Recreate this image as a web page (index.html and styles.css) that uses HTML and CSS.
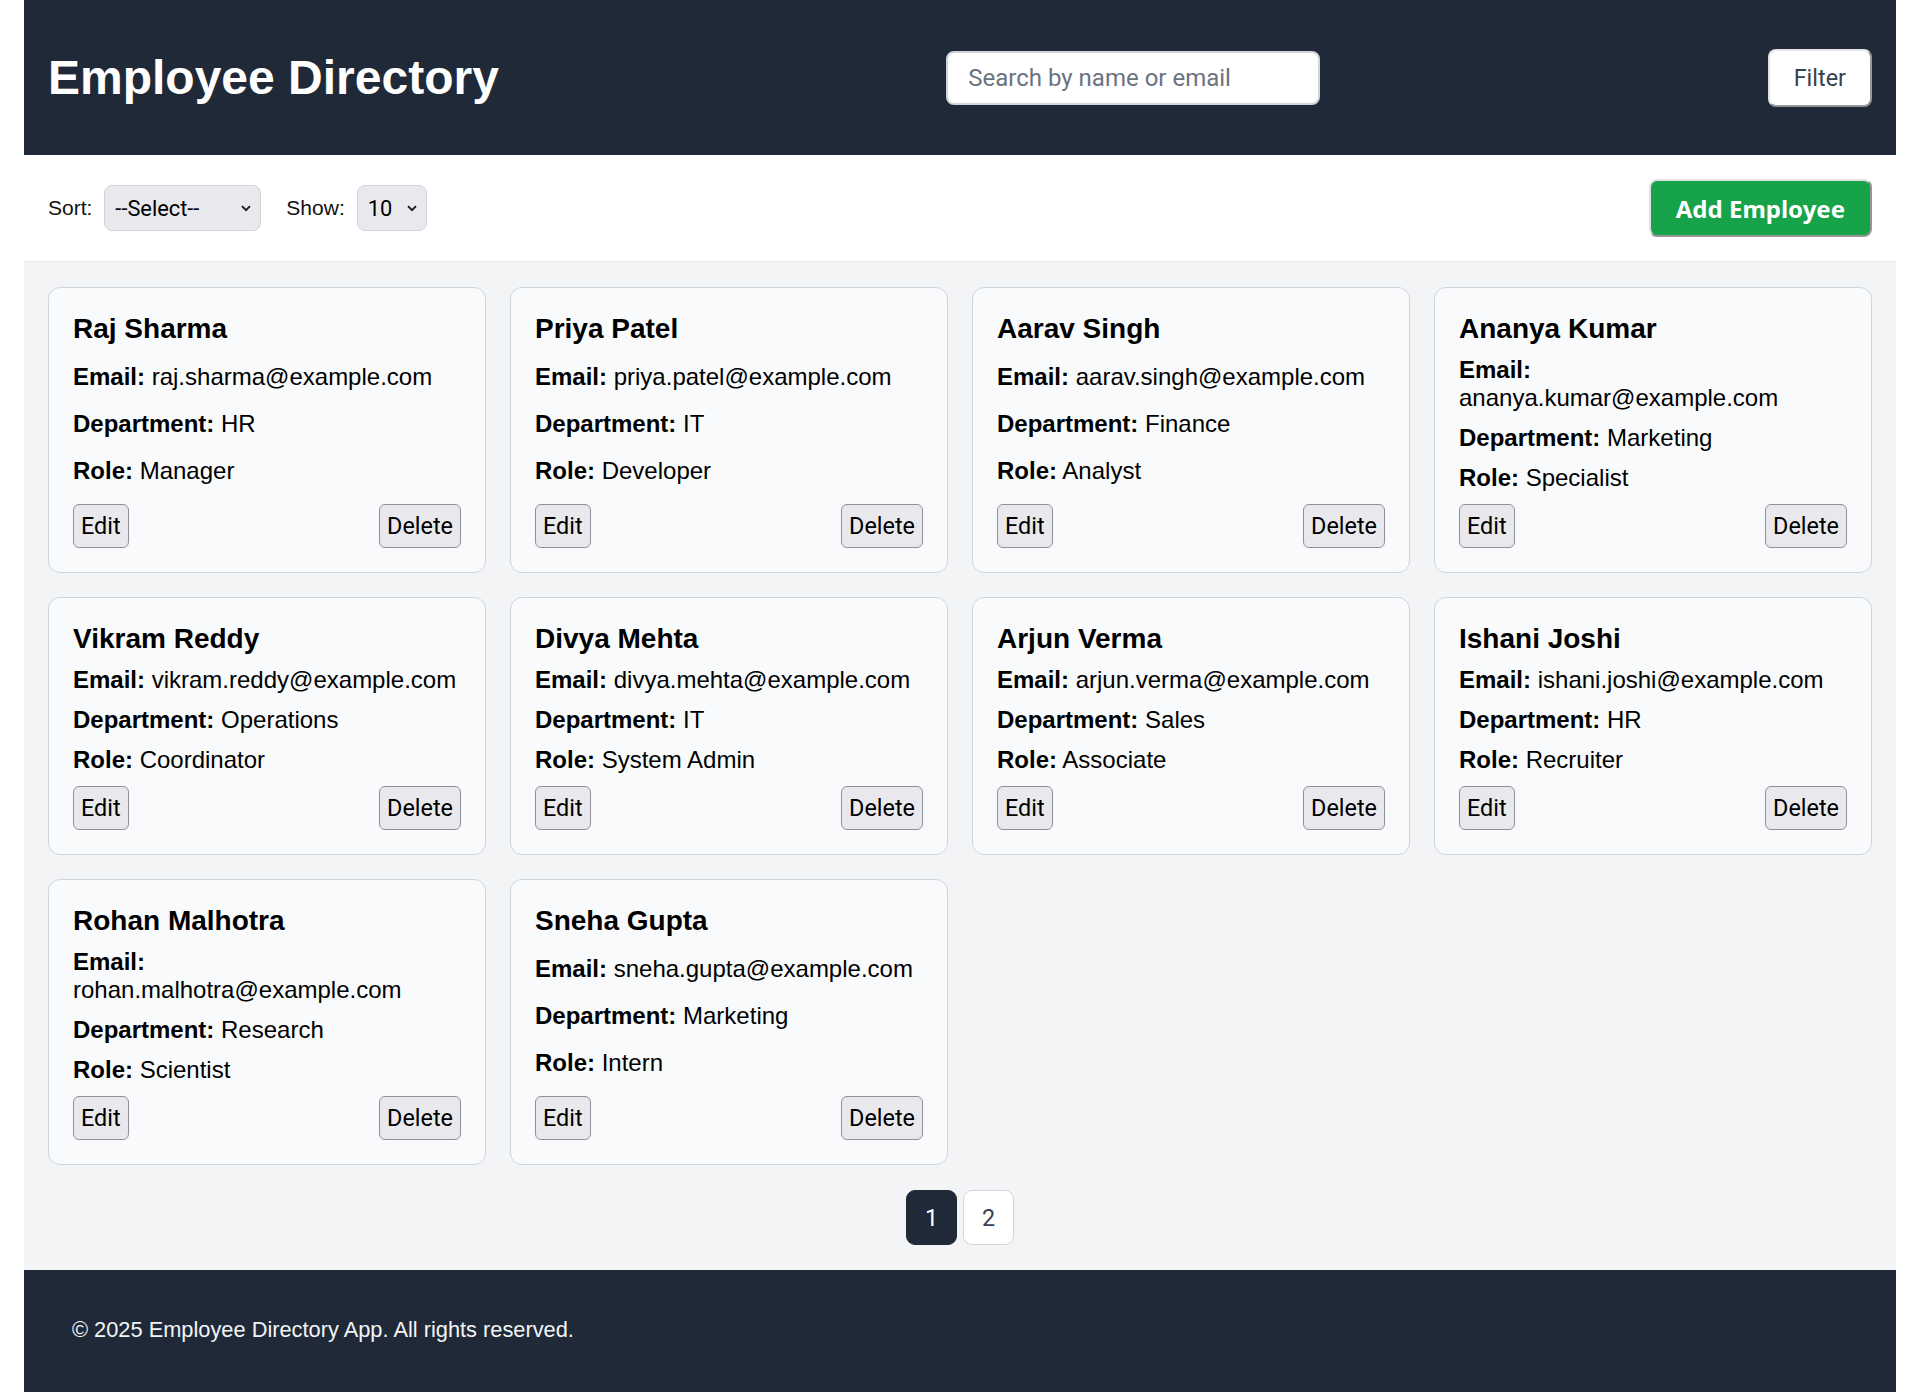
FILE: index.html
```html
<!DOCTYPE html>
<html lang="en">
<head>
<meta charset="utf-8">
<title>Employee Directory</title>
<link rel="stylesheet" href="styles.css">
</head>
<body>
<div class="app">
  <header class="header">
    <h1 class="title">Employee Directory</h1>
    <input class="search" type="text" placeholder="Search by name or email">
    <button class="btn-filter">Filter</button>
  </header>

  <div class="toolbar">
    <div class="controls">
      <label class="ctl-label">Sort:</label>
      <span class="select-wrap">
        <select class="select select-sort"><option>--Select--</option></select>
        <svg class="chev" width="10" height="7" viewBox="0 0 10 7"><path d="M1 1.2 L5 5.2 L9 1.2" fill="none" stroke="#1a1a1a" stroke-width="1.9"/></svg>
      </span>
      <label class="ctl-label ctl-show">Show:</label>
      <span class="select-wrap">
        <select class="select select-show"><option>10</option></select>
        <svg class="chev" width="10" height="7" viewBox="0 0 10 7"><path d="M1 1.2 L5 5.2 L9 1.2" fill="none" stroke="#1a1a1a" stroke-width="1.9"/></svg>
      </span>
    </div>
    <button class="btn-add">Add Employee</button>
  </div>

  <main class="main">
    <div class="grid">
      <div class="card">
        <h3 class="name">Raj Sharma</h3>
        <p class="field"><strong>Email:</strong> raj.sharma@example.com</p>
        <p class="field"><strong>Department:</strong> HR</p>
        <p class="field"><strong>Role:</strong> Manager</p>
        <div class="actions"><button class="btn-sm">Edit</button><button class="btn-sm">Delete</button></div>
      </div>
      <div class="card">
        <h3 class="name">Priya Patel</h3>
        <p class="field"><strong>Email:</strong> priya.patel@example.com</p>
        <p class="field"><strong>Department:</strong> IT</p>
        <p class="field"><strong>Role:</strong> Developer</p>
        <div class="actions"><button class="btn-sm">Edit</button><button class="btn-sm">Delete</button></div>
      </div>
      <div class="card">
        <h3 class="name">Aarav Singh</h3>
        <p class="field"><strong>Email:</strong> aarav.singh@example.com</p>
        <p class="field"><strong>Department:</strong> Finance</p>
        <p class="field"><strong>Role:</strong> Analyst</p>
        <div class="actions"><button class="btn-sm">Edit</button><button class="btn-sm">Delete</button></div>
      </div>
      <div class="card">
        <h3 class="name">Ananya Kumar</h3>
        <p class="field"><strong>Email:</strong> ananya.kumar@example.com</p>
        <p class="field"><strong>Department:</strong> Marketing</p>
        <p class="field"><strong>Role:</strong> Specialist</p>
        <div class="actions"><button class="btn-sm">Edit</button><button class="btn-sm">Delete</button></div>
      </div>
      <div class="card">
        <h3 class="name">Vikram Reddy</h3>
        <p class="field"><strong>Email:</strong> vikram.reddy@example.com</p>
        <p class="field"><strong>Department:</strong> Operations</p>
        <p class="field"><strong>Role:</strong> Coordinator</p>
        <div class="actions"><button class="btn-sm">Edit</button><button class="btn-sm">Delete</button></div>
      </div>
      <div class="card">
        <h3 class="name">Divya Mehta</h3>
        <p class="field"><strong>Email:</strong> divya.mehta@example.com</p>
        <p class="field"><strong>Department:</strong> IT</p>
        <p class="field"><strong>Role:</strong> System Admin</p>
        <div class="actions"><button class="btn-sm">Edit</button><button class="btn-sm">Delete</button></div>
      </div>
      <div class="card">
        <h3 class="name">Arjun Verma</h3>
        <p class="field"><strong>Email:</strong> arjun.verma@example.com</p>
        <p class="field"><strong>Department:</strong> Sales</p>
        <p class="field"><strong>Role:</strong> Associate</p>
        <div class="actions"><button class="btn-sm">Edit</button><button class="btn-sm">Delete</button></div>
      </div>
      <div class="card">
        <h3 class="name">Ishani Joshi</h3>
        <p class="field"><strong>Email:</strong> ishani.joshi@example.com</p>
        <p class="field"><strong>Department:</strong> HR</p>
        <p class="field"><strong>Role:</strong> Recruiter</p>
        <div class="actions"><button class="btn-sm">Edit</button><button class="btn-sm">Delete</button></div>
      </div>
      <div class="card">
        <h3 class="name">Rohan Malhotra</h3>
        <p class="field"><strong>Email:</strong> rohan.malhotra@example.com</p>
        <p class="field"><strong>Department:</strong> Research</p>
        <p class="field"><strong>Role:</strong> Scientist</p>
        <div class="actions"><button class="btn-sm">Edit</button><button class="btn-sm">Delete</button></div>
      </div>
      <div class="card">
        <h3 class="name">Sneha Gupta</h3>
        <p class="field"><strong>Email:</strong> sneha.gupta@example.com</p>
        <p class="field"><strong>Department:</strong> Marketing</p>
        <p class="field"><strong>Role:</strong> Intern</p>
        <div class="actions"><button class="btn-sm">Edit</button><button class="btn-sm">Delete</button></div>
      </div>
    </div>
    <nav class="pagination">
      <button class="page page-active">1</button>
      <button class="page">2</button>
    </nav>
  </main>

  <footer class="footer">
    <p class="footer-text">© 2025 Employee Directory App. All rights reserved.</p>
  </footer>
</div>
</body>
</html>
```

FILE: styles.css
```css
* { box-sizing: border-box; }

html, body {
  margin: 0;
  padding: 0;
  background: #ffffff;
}

body {
  padding: 0 24px;
  font-family: "Liberation Sans", Arial, sans-serif;
  color: #000;
}

.app {
  display: flex;
  flex-direction: column;
}

/* Header */
.header {
  background: #1f2937;
  height: 155px;
  padding: 0 24px;
  display: flex;
  align-items: center;
  justify-content: space-between;
}

.title {
  margin: 0;
  color: #ffffff;
  font-size: 48px;
  line-height: 55px;
  font-weight: 700;
}

.search {
  width: 374px;
  height: 54px;
  padding: 0 20px;
  border: 2px solid #d1d5db;
  border-radius: 8px;
  background: #ffffff;
  font-family: Roboto, "Noto Sans", sans-serif;
  font-size: 24px;
  color: #111827;
  outline: none;
}
.search::placeholder { color: #6b7280; }

.btn-filter {
  height: 58px;
  padding: 0 24px;
  background: #ffffff;
  color: #374151;
  font-family: Roboto, "Noto Sans", sans-serif;
  font-size: 23.4px;
  border-width: 2px;
  border-style: solid;
  border-color: #e3e3e3 #979797 #979797 #e3e3e3;
  border-radius: 8px;
}

/* Toolbar */
.toolbar {
  background: #ffffff;
  padding: 24px;
  border-bottom: 1px solid #e5e7eb;
  display: flex;
  align-items: center;
  justify-content: space-between;
}

.controls {
  display: flex;
  align-items: center;
}

.ctl-label {
  font-size: 21px;
  color: #111;
  margin-right: 12px;
}
.ctl-show { margin-left: 25px; }

.select-wrap {
  position: relative;
  display: inline-flex;
}

.select {
  appearance: none;
  -webkit-appearance: none;
  height: 46px;
  padding: 0 30px 0 10px;
  background: #e9e9ed;
  border: 1px solid #d1d5db;
  border-radius: 8px;
  font-family: Roboto, "Noto Sans", sans-serif;
  font-size: 21.8px;
  color: #000;
}
.select-sort { width: 157px; }
.select-show { width: 70px; }

.chev {
  position: absolute;
  right: 10px;
  top: 20px;
  pointer-events: none;
}

.btn-add {
  height: 58px;
  padding: 0 25px;
  background: #16a34a;
  color: #ffffff;
  font-family: "Noto Sans", sans-serif;
  font-weight: 700;
  font-size: 24px;
  border-width: 2px;
  border-style: solid;
  border-color: #e3e3e3 #979797 #979797 #e3e3e3;
  border-radius: 8px;
}

/* Main */
.main {
  background: #f3f4f6;
  padding: 25px 24px;
}

.grid {
  display: grid;
  grid-template-columns: repeat(4, 1fr);
  gap: 24px;
}

.card {
  background: #f9fafb;
  border: 1px solid #d1d5db;
  border-radius: 12px;
  padding: 24px;
  display: flex;
  flex-direction: column;
  justify-content: space-between;
  gap: 12px;
}

.name {
  margin: 0 0 -1px;
  padding-top: 1px;
  font-size: 28px;
  line-height: 32px;
  font-weight: 700;
  color: #000;
}

.field {
  margin: 0;
  font-size: 24px;
  line-height: 28px;
  color: #000;
}
.field strong { font-weight: 700; }

.actions {
  display: flex;
  justify-content: space-between;
}

.btn-sm {
  height: 44px;
  padding: 0 7px;
  background: #e9e9ed;
  border: 1px solid #8f8f9d;
  border-radius: 6px;
  font-family: Roboto, "Noto Sans", sans-serif;
  font-size: 23.4px;
  color: #000;
}

.pagination {
  margin-top: 25px;
  display: flex;
  justify-content: center;
  gap: 6px;
}

.page {
  width: 51px;
  height: 55px;
  padding: 0;
  background: #ffffff;
  border: 1px solid #d1d5db;
  border-radius: 9px;
  font-family: Roboto, "Noto Sans", sans-serif;
  font-size: 23.4px;
  color: #374151;
}
.page-active {
  background: #1f2937;
  border-color: #1f2937;
  color: #ffffff;
}

/* Footer */
.footer {
  background: #1f2937;
  padding: 48px 48px 50px;
}

.footer-text {
  margin: 0;
  color: #f3f4f6;
  font-size: 21.8px;
  line-height: 24px;
}
```
